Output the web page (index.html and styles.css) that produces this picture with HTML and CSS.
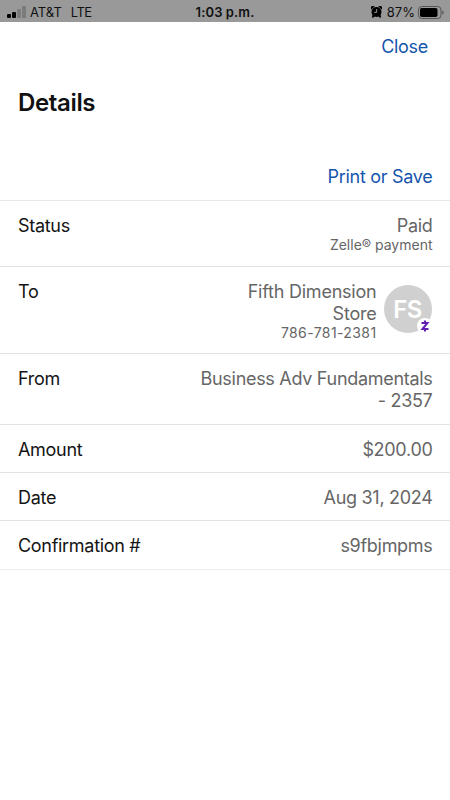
FILE: index.html
```html
<!DOCTYPE html>
<html lang="en">
<head>
<meta charset="utf-8">
<meta name="viewport" content="width=device-width, initial-scale=1">
<title>Details</title>
<link rel="stylesheet" href="styles.css">
</head>
<body>
<header class="status-bar">
  <div class="carrier">
    <svg class="signal" width="19" height="12" viewBox="0 0 19 12"><rect x="0" y="8" width="4" height="4" rx="1"/><rect x="5" y="6" width="4" height="6" rx="1"/><rect class="dim" x="10" y="3" width="4" height="9" rx="1"/><rect class="dim" x="15" y="0" width="4" height="12" rx="1"/></svg>
    <span class="carrier-name">AT&amp;T</span>
    <span class="network">LTE</span>
  </div>
  <div class="clock">1:03 p.m.</div>
  <div class="power">
    <svg class="alarm" width="11" height="12" viewBox="0 0 11 12"><circle cx="5.5" cy="6" r="5"/><path d="M.3 3.600A2.200 2.200 0 0 1 3.600.5ZM10.700 3.600A2.200 2.200 0 0 0 7.400.5ZM1.500 8.500.8 11.400h1.700L4 10ZM9.500 8.500l.7 2.900H8.500L7 10Z"/><path class="hands" d="M5.700 3v3.300H3.200"/></svg>
    <span class="percent">87%</span>
    <svg class="battery" width="26" height="13" viewBox="0 0 26 13"><rect class="shell" x=".5" y=".5" width="22.500" height="12" rx="3.300"/><rect x="2" y="2" width="17.500" height="9" rx="1.800"/><path class="cap" d="M24.300 4.500q1.500.4 1.500 2t-1.500 2Z"/></svg>
  </div>
</header>
<main>
  <div class="close"><a class="link close-link">Close</a></div>
  <h1>Details</h1>
  <div class="actions"><a class="link print-link">Print or Save</a></div>
  <dl class="details">
    <div class="row status"><dt>Status</dt><dd><div>Paid</div><div class="note payment">Zelle® payment</div></dd></div>
    <div class="row to"><dt>To</dt><dd class="recipient"><div class="recipient-text"><div class="name">Fifth Dimension<br>Store</div><div class="note phone">786-781-2381</div></div>
      <div class="avatar">FS<span class="badge"><svg width="10" height="12" viewBox="0 0 10 12"><path d="M1.500 3h5.900L2.500 9h6M5 .6V3M5 9v2.500"/></svg></span></div></dd></div>
    <div class="row from"><dt>From</dt><dd class="account">Business Adv Fundamentals<br>- 2357</dd></div>
    <div class="row"><dt class="amount-label">Amount</dt><dd class="amount">$200.00</dd></div>
    <div class="row"><dt>Date</dt><dd class="date">Aug 31, 2024</dd></div>
    <div class="row last"><dt class="confirm-label">Confirmation #</dt><dd class="code">s9fbjmpms</dd></div>
  </dl>
</main>
</body>
</html>
```
FILE: styles.css
```css
* { box-sizing: border-box; }
body {
  margin: 0;
  min-height: 800px;
  background: #fff;
  color: #141414;
  font-family: Inter, "Liberation Sans", sans-serif;
  font-size: 18px;
  line-height: 22px;
  letter-spacing: -0.3px;
}
.status-bar {
  display: grid;
  grid-template-columns: 1fr auto 1fr;
  align-items: center;
  height: 22px;
  padding: 1px 6px 0 7px;
  background: #999;
  color: #111;
  font-size: 13px;
  white-space: nowrap;
}
.carrier, .power { display: flex; align-items: center; }
.power { justify-content: flex-end; }
.carrier-name { margin-left: 4px; letter-spacing: 0; }
.network { margin-left: 9px; letter-spacing: -0.5px; }
.clock { margin-right: 1px; font-weight: 600; letter-spacing: 0.1px; }
.dim { fill: #7b7b7b; }
.percent { margin: 0 3px 0 5px; letter-spacing: 0; }
.hands { fill: none; stroke: #999; stroke-width: 1; }
.shell { fill: none; stroke: #555; }
.cap { fill: #555; }
.close { display: flex; justify-content: flex-end; padding: 14px 22px 0; }
.link { color: #1556ad; }
h1 {
  margin: 30px 18px 0;
  font-size: 24px;
  font-weight: 600;
  line-height: 30px;
  letter-spacing: -0.35px;
  color: #111;
}
.actions {
  display: flex;
  justify-content: flex-end;
  height: 83px;
  padding: 48px 17.5px 0;
  border-bottom: 1px solid #e8e8e8;
}
.details { margin: 0; }
.row {
  display: flex;
  justify-content: space-between;
  height: 48px;
  padding: 13.5px 17.5px 0 18px;
  border-bottom: 1px solid #e2e2e2;
}
.row.status { height: 66px; }
.row.to { height: 87px; }
.row.from { height: 71px; }
.row.last { height: 49px; border-color: #ececec; }
dd { margin: 0; color: #666; text-align: right; }
.note { font-size: 14px; line-height: 18px; letter-spacing: 0; }
.row.status .note { margin-top: -1px; }
.phone { margin-top: -1px; letter-spacing: 0.4px; }
.name { letter-spacing: -0.22px; }
.recipient { display: flex; gap: 7px; margin-right: 1px; }
.avatar {
  position: relative;
  width: 48px;
  height: 48px;
  margin-top: 4.5px;
  border-radius: 50%;
  background: #d0d0d0;
  color: #fff;
  font-size: 24px;
  font-weight: 600;
  line-height: 49px;
  text-align: center;
  letter-spacing: -0.5px;
}
.badge {
  position: absolute;
  right: -1px;
  bottom: -1px;
  display: flex;
  align-items: center;
  justify-content: center;
  width: 16px;
  height: 16px;
  border-radius: 50%;
  background: #fff;
}
.badge path { fill: none; stroke: #6420b4; stroke-width: 2; }
```
